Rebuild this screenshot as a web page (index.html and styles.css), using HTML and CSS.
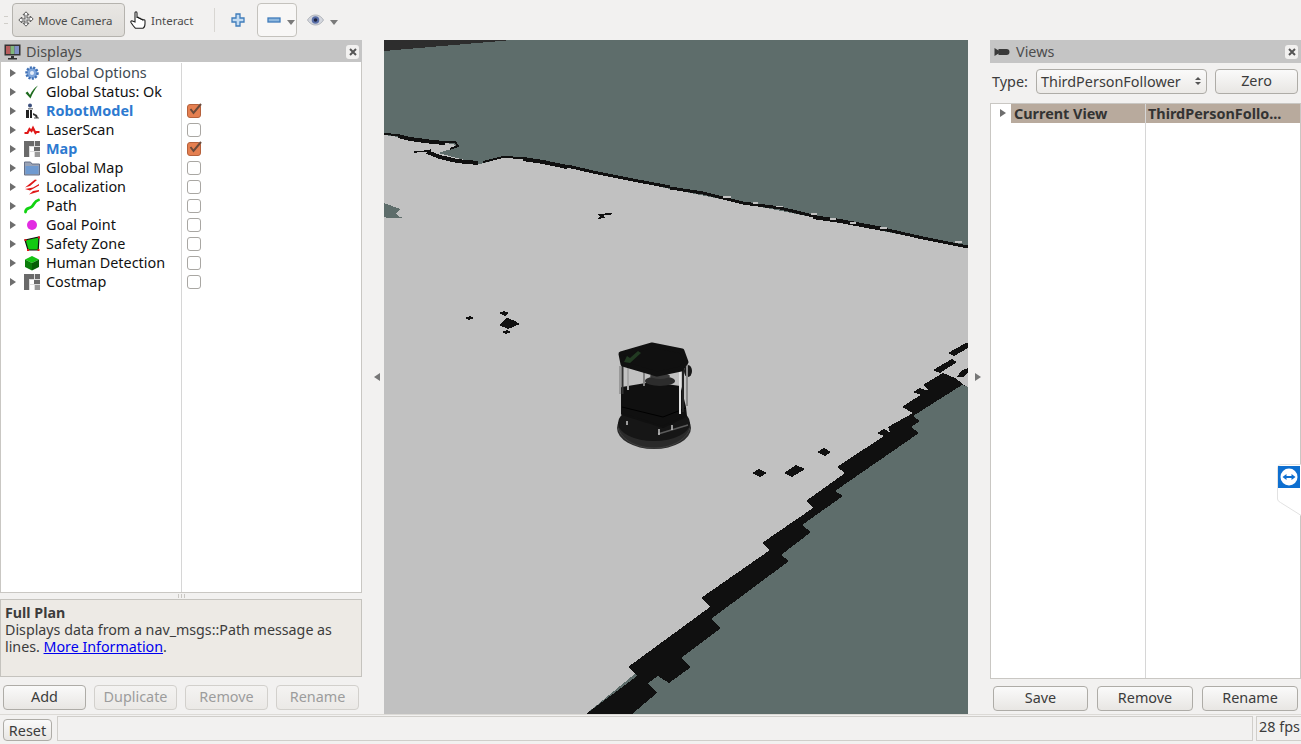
FILE: index.html
```html
<!DOCTYPE html>
<html lang="en">
<head>
  <meta charset="UTF-8" />
  <title>RViz</title>
  <link rel="stylesheet" href="styles.css">
</head>
<body>

<div class="toolbar">
  <span class="grip"></span>
  <button class="tool tool-active">
    <svg width="18" height="18" viewBox="0 0 18 18" fill="#fff" stroke="#555" stroke-width="1">
      <path d="M9 .8l3 3h-2v3.200h3.200v-2l3 3-3 3v-2H10v3.200h2l-3 3-3-3h2V10H4.800v2l-3-3 3-3v2H8V3.800H6z"/>
      <path d="M5 9h8M9 5v8" stroke="#999" stroke-width=".7"/>
    </svg>
    Move Camera
  </button>
  <button class="tool tool-hand">
    <svg width="18" height="20" viewBox="0 0 18 20" fill="#fff" stroke="#222" stroke-width="1.100">
      <path d="M5 12V3c0-1.600 2-1.600 2 0v5c0-1 2-1 2 0v1c0-1 2-1 2 0v1c0-1 2-1 2 0 .5-.5 2-.5 2 .8v3c0 2-1 4-2 4.500H5.500C4 17 2 14 1 12.500c-.6-1.200 .8-2.400 2-1.200z"/>
    </svg>
    Interact
  </button>
  <span class="tool-sep"></span>
  <svg class="plus" width="14" height="14" viewBox="0 0 14 14" fill="#c4dcf2" stroke="#3f7cba" stroke-width="1.300">
    <path d="M5 1h4v4h4v4H9v4H5V9H1V5h4z"/>
  </svg>
  <button class="minus-btn">
    <svg width="14" height="6" viewBox="0 0 14 6" fill="#8fb8de" stroke="#3f7cba" stroke-width="1.300"><rect x="1" y="1" width="12" height="4"/></svg>
    <span class="drop"></span>
  </button>
  <svg class="eye" width="17" height="12" viewBox="0 0 17 12">
    <path d="M.5 6C3 2 6 1 8.500 1S14 2 16.500 6C14 10 11 11 8.500 11S3 10 .5 6z" fill="#d3d6dd" stroke="#9a9da6" stroke-width=".7"/>
    <circle cx="8.500" cy="6" r="3.800" fill="#5a6fa8"/>
    <circle cx="8.500" cy="6" r="1.800" fill="#1e2440"/>
  </svg>
  <span class="drop"></span>
</div>

<div class="main">

  <div class="dock dock-left">
    <div class="dock-title">
      <svg width="17" height="16" viewBox="0 0 17 16">
        <rect x=".5" y=".5" width="16" height="11" fill="#333"/>
        <rect x="2" y="2" width="4.500" height="8" fill="#b85d5d"/>
        <rect x="6.500" y="2" width="4" height="8" fill="#7fb57a"/>
        <rect x="10.500" y="2" width="4.500" height="8" fill="#7f8fc4"/>
        <path d="M7 12h3v2h3v1.500H4V14h3z" fill="#333"/>
      </svg>
      <span class="dock-name">Displays</span>
      <span class="dock-close"><svg width="8" height="8" viewBox="0 0 8 8" stroke="#555" stroke-width="2"><path d="M1 1l6 6M7 1l-6 6"/></svg></span>
    </div>

    <div class="tree display-tree">
      <div class="tree-names">
        <div class="row"><span class="arrow"></span>
          <svg class="ico" width="16" height="16" viewBox="0 0 16 16"><circle cx="8" cy="8" r="5.500" fill="#7fa6db" stroke="#3f70b5" stroke-width="2.500" stroke-dasharray="2 1.300"/><circle cx="8" cy="8" r="2" fill="#e5eefa"/></svg>
          <span class="row-text dim">Global Options</span></div>
        <div class="row"><span class="arrow"></span>
          <svg class="ico" width="16" height="16" viewBox="0 0 16 16"><path d="M1.500 9l2-1.500 2.500 3.500C8 7 10.500 3.500 14 1.500 11 5 8.500 9.500 6.500 14.500z" fill="#1e6b1e"/></svg>
          <span class="row-text">Global Status: Ok</span></div>
        <div class="row"><span class="arrow"></span>
          <svg class="ico" width="16" height="16" viewBox="0 0 16 16"><circle cx="6" cy="2.500" r="2" fill="#3c4f7c"/><rect x="4" y="5" width="5" height="1.500" fill="#8a8a8a"/><path d="M2 7h3v8H2zM6 7h2v8H6z" fill="#222"/><path d="M9 10l4 2 1 3h-2l-1-2-2-1z" fill="#333"/><path d="M10 15h5" stroke="#555"/></svg>
          <span class="row-text changed">RobotModel</span></div>
        <div class="row"><span class="arrow"></span>
          <svg class="ico" width="16" height="16" viewBox="0 0 16 16"><path d="M.5 11h3l2-4 2 2 1.500-3 2.500 5 1-1h3" fill="none" stroke="#e01818" stroke-width="2.200"/></svg>
          <span class="row-text">LaserScan</span></div>
        <div class="row"><span class="arrow"></span>
          <svg class="ico" width="16" height="16" viewBox="0 0 16 16"><rect width="16" height="16" fill="#ddd"/><path d="M0 0h5v5H0zM5 0h5v5H5zM0 5h5v5H0zM0 10h5v6H0zM11 0h5v5h-5zM10 6h6v4h-6z" fill="#6a6a6a"/><path d="M11 11h5v5h-5z" fill="#999"/><path d="M6 6h4v4H6zM6 11h4v5H6z" fill="#fff"/></svg>
          <span class="row-text changed">Map</span></div>
        <div class="row"><span class="arrow"></span>
          <svg class="ico" width="16" height="16" viewBox="0 0 16 16"><path d="M.5 2h6l1.500 2h7.500v11H.5z" fill="#9aa3b5" stroke="#667087"/><rect x="1.500" y="6" width="13" height="8" fill="#6f9ad0"/></svg>
          <span class="row-text">Global Map</span></div>
        <div class="row"><span class="arrow"></span>
          <svg class="ico" width="16" height="16" viewBox="0 0 16 16" fill="#e01818"><path d="M11 .5l2 .5-7 6-5 1.500zM15 5v1.500L6 11.500l-5-1.500 8-1.500zM15 11v1.500L5 15.500l4-3.500z"/></svg>
          <span class="row-text">Localization</span></div>
        <div class="row"><span class="arrow"></span>
          <svg class="ico" width="16" height="16" viewBox="0 0 16 16"><path d="M1.500 14c0-5 4-3 6.500-5.500S10.500 3 14.500 2" fill="none" stroke="#12d312" stroke-width="2.800" stroke-linecap="round"/></svg>
          <span class="row-text">Path</span></div>
        <div class="row"><span class="arrow"></span>
          <svg class="ico" width="16" height="16" viewBox="0 0 16 16"><circle cx="8" cy="8" r="5" fill="#e22be2"/></svg>
          <span class="row-text">Goal Point</span></div>
        <div class="row"><span class="arrow"></span>
          <svg class="ico" width="16" height="16" viewBox="0 0 16 16"><path d="M1 4l14-3-.8 13H4z" fill="#12c912" stroke="#111" stroke-width="1.200"/><path d="M.5 3h2v2h-2zM14 .5h2v2h-2zM13.500 13h2v2h-2zM3 13h2v2H3z" fill="#e01818"/></svg>
          <span class="row-text">Safety Zone</span></div>
        <div class="row"><span class="arrow"></span>
          <svg class="ico" width="16" height="16" viewBox="0 0 16 16"><path d="M8 1l7 3.500L8 8 1 4.500z" fill="#16c316"/><path d="M1 4.500L8 8v7.500L1 12z" fill="#0b7d0b"/><path d="M15 4.500L8 8v7.500l7-3.500z" fill="#075f07"/></svg>
          <span class="row-text">Human Detection</span></div>
        <div class="row"><span class="arrow"></span>
          <svg class="ico" width="16" height="16" viewBox="0 0 16 16"><rect width="16" height="16" fill="#ddd"/><path d="M0 0h5v5H0zM5 0h5v5H5zM0 5h5v5H0zM0 10h5v6H0zM11 0h5v5h-5zM10 6h6v4h-6z" fill="#6a6a6a"/><path d="M11 11h5v5h-5z" fill="#999"/><path d="M6 6h4v4H6zM6 11h4v5H6z" fill="#fff"/></svg>
          <span class="row-text">Costmap</span></div>
      </div>
      <div class="tree-checks">
        <div class="row"></div>
        <div class="row"></div>
        <div class="row"><span class="check check-on"><svg width="16" height="14" viewBox="0 0 16 14" fill="none" stroke="#6b4a3a" stroke-width="2"><path d="M3.500 6l3 4L14 1"/></svg></span></div>
        <div class="row"><span class="check"></span></div>
        <div class="row"><span class="check check-on"><svg width="16" height="14" viewBox="0 0 16 14" fill="none" stroke="#6b4a3a" stroke-width="2"><path d="M3.500 6l3 4L14 1"/></svg></span></div>
        <div class="row"><span class="check"></span></div>
        <div class="row"><span class="check"></span></div>
        <div class="row"><span class="check"></span></div>
        <div class="row"><span class="check"></span></div>
        <div class="row"><span class="check"></span></div>
        <div class="row"><span class="check"></span></div>
        <div class="row"><span class="check"></span></div>
      </div>
    </div>

    <div class="handle"><i></i><i></i><i></i></div>

    <div class="info">
      <strong>Full Plan</strong><br>
      Displays data from a nav_msgs::Path message as<br>
      lines. <a href="#">More Information</a>.
    </div>

    <div class="btn-row left-btns">
      <button class="btn">Add</button>
      <button class="btn" disabled>Duplicate</button>
      <button class="btn" disabled>Remove</button>
      <button class="btn" disabled>Rename</button>
    </div>
  </div>

  <div class="splitter"><span class="tri tri-left"></span></div>

  <div class="viewport">
    <svg class="scene" width="584" height="674" viewBox="384 40 584 674">
      <rect x="384" y="40" width="584" height="674" fill="#5e6d6b"/>
      <polygon points="384,40 512,40 384,51" fill="#2d2d2d"/>
      <!-- floor -->
      <polygon fill="#c1c1c1" points="384,135 413,139 453,144 458,147 448,150 438,153 480,164 503,158 523,159 580,169 670,189 968,248 968,400 586,714 384,714"/>
      <polygon fill="#5e6d6b" points="384,203 392,206 400,209 396,214 400,217 403,218 387,218 384,217"/>
      <!-- top wall -->
      <g fill="none" stroke="#101010" stroke-width="3">
        <polyline stroke-width="2" points="384,134 398,135"/>
        <polyline stroke-width="4" points="398,136 410,139 433,142 445,143"/>
        <polyline stroke-width="2" points="440,142 455,142 458,146 450,149"/>
        <polyline stroke-width="1.500" points="414,152 428,151 431,150"/>
        <polyline stroke-width="4" points="427,152 440,157 457,161 478,163"/>
        <polyline stroke-width="2" points="483,162 503,157 523,158"/>
        <polyline stroke-width="4" points="523,159 543,162 567,167"/>
        <polyline points="567,166 593,172 633,180 670,187"/>
        <polyline points="670,188 703,193 743,203 780,208 813,216"/>
        <polyline stroke-width="4" points="813,217 840,221 883,229"/>
        <polyline points="883,229 923,238 968,247"/>
      </g>
      <g fill="#c1c1c1">
        <rect x="723" y="196" width="8" height="2"/>
        <rect x="753" y="202" width="5" height="2"/>
        <rect x="776" y="206" width="7" height="1"/>
        <rect x="811" y="213" width="6" height="2"/>
        <rect x="830" y="218" width="6" height="2"/>
        <rect x="850" y="222" width="6" height="2"/>
        <rect x="880" y="227" width="7" height="2"/>
        <rect x="955" y="241" width="7" height="2"/>
      </g>
      <polygon fill="#101010" points="597,214 612,213 611,215 604,215 605,218 597,219 600,216"/>
      <!-- specks -->
      <g fill="#101010">
        <polygon points="465,318 470,316 474,318 469,320"/>
        <polygon points="499,313 504,311 509,313 505,316"/>
        <polygon points="499,325 507,318 513,320 520,324 508,329"/>
        <polygon points="502,332 507,330 511,332 506,334"/>
        <polygon points="752,473 759,469 767,473 760,477"/>
        <polygon points="784,473 796,465 805,469 792,477"/>
        <polygon points="817,452 824,448 831,452 825,456"/>
        <polygon points="948,353 966,343 968,343 968,348 954,356"/>
        <polygon points="933,370 952,359 957,362 940,373"/>
        <polygon points="957,377 962,370 968,368 968,373 963,377"/>
        <polygon points="913,392 920,388 928,391 921,395"/>
        <polygon points="877,433 884,429 893,434 886,437"/>
      </g>
      <!-- lower wall -->
      <polygon fill="#101010" points="586,714 637,676 628,667 710,607 701,598 770,550 762,543 813,508 806,501 845,473 837,467 890,432 888,427 913,413 902,407 928,390 923,385 943,373 955,378 968,388 968,714"/>
      <polygon fill="#5e6d6b" points="632,714 657,693 648,683 658,676 669,683 691,667 681,658 721,628 711,619 789,561 781,555 811,532 802,525 843,496 835,491 919,433 911,427 920,421 913,416 962,385 968,387 968,714"/>
      <!-- robot -->
      <g class="robot">
        <ellipse cx="654" cy="428" rx="37" ry="21" fill="#2a2a2a"/>
        <ellipse cx="654" cy="423" rx="36" ry="18" fill="#161616"/>
        <path d="M618 428c4 13 20 20 36 20s32-7 36-20" fill="none" stroke="#404040" stroke-width="1"/>
        <path d="M658 434l30-9" stroke="#5c5c5c" stroke-width="1.500"/>
        <path d="M627 425v-4M659 435v-6M672 430v-5" stroke="#c8c8c8" stroke-width="1.500"/>
        <polygon points="622,388 652,383 680,387 685,407 686,416 663,427 622,414" fill="#101010" stroke="#101010" stroke-width="2" stroke-linejoin="round"/>
        <path d="M622 407l41 10 23-9" fill="none" stroke="#000" stroke-width="1"/>
        <ellipse cx="660" cy="381" rx="15" ry="5" fill="#2c2c2c"/>
        <ellipse cx="660" cy="376" rx="10" ry="3" fill="#3a3a3a"/>
        <ellipse cx="688" cy="371" rx="4" ry="6" fill="#181818"/>
        <g stroke-width="2">
          <path d="M620 366v28" stroke="#9a9a9a"/>
          <path d="M622.500 366v28" stroke="#333"/>
          <path d="M628 368v22" stroke="#a8a8a8"/>
          <path d="M680 368v46" stroke="#e2e2e2"/>
          <path d="M683 368v44" stroke="#222"/>
          <path d="M687 364v42" stroke="#8a8a8a"/>
          <path d="M644 372v14" stroke="#808080"/>
        </g>
        <polygon points="621,354 652,345 682,351 686,362 681,369 657,374 623,364" fill="#101010" stroke="#101010" stroke-width="5" stroke-linejoin="round"/>
        <path d="M624 362l6 1 11-10-3-2-8 7-3-2z" fill="#223a22"/>
      </g>
    </svg>
  </div>

  <div class="splitter"><span class="tri tri-right"></span></div>

  <div class="dock dock-right">
    <div class="dock-title">
      <svg width="17" height="16" viewBox="0 0 17 16" fill="#3a3a3a"><path d="M.5 4l4 2.500V5h8a3 3 0 0 1 0 6h-8V9.500L.5 12z"/></svg>
      <span class="dock-name">Views</span>
      <span class="dock-close"><svg width="8" height="8" viewBox="0 0 8 8" stroke="#555" stroke-width="2"><path d="M1 1l6 6M7 1l-6 6"/></svg></span>
    </div>

    <div class="type-row">
      <span class="type-label">Type:</span>
      <div class="combo">ThirdPersonFollower<span class="spin"><i class="up"></i><i class="dn"></i></span></div>
      <button class="btn zero">Zero</button>
    </div>

    <div class="tree view-tree">
      <div class="view-col view-col-a">
        <div class="view-head"><span class="arrow"></span><b>Current View</b></div>
      </div>
      <div class="view-col view-col-b">
        <div class="view-head"><b>ThirdPersonFollo...</b></div>
      </div>
    </div>

    <div class="btn-row right-btns">
      <button class="btn">Save</button>
      <button class="btn">Remove</button>
      <button class="btn">Rename</button>
    </div>
  </div>

</div>

<div class="statusbar">
  <button class="btn reset">Reset</button>
  <div class="status-field"></div>
  <div class="status-field fps">28 fps</div>
</div>

<!-- remote desktop tab that floats over the window -->
<svg class="tv-tab" width="25" height="54" viewBox="0 0 25 54">
  <path d="M25 .5H4Q.5 .5 .5 4v31q0 2 3 3.500L25 52" fill="#fff" stroke="#e2e2e2"/>
  <rect x="1" y="2" width="22" height="22" fill="#0e6fd0"/>
  <circle cx="12" cy="13" r="8.500" fill="#fff"/>
  <path d="M5.500 13l4-3v2h5v-2l4 3-4 3v-2h-5v2z" fill="#0e6fd0"/>
</svg>

</body>
</html>
```

FILE: styles.css
```css
body {
  margin: 0;
  width: 1301px;
  height: 744px;
  overflow: hidden;
  background: #f2f1f0;
  font-family: "Noto Sans", "Open Sans", sans-serif;
  font-size: 14.4px;
  color: #3c3c3c;
}
button {
  font-family: inherit;
  cursor: pointer;
}

/* toolbar */
.toolbar {
  height: 40px;
  box-sizing: border-box;
  display: flex;
  align-items: center;
}
.grip {
  width: 4px;
  height: 8px;
  margin: 0 4px;
  border-top: 1px solid #d0cec9;
  border-bottom: 1px solid #d0cec9;
  box-sizing: border-box;
}
.tool {
  height: 34px;
  border: 1px solid transparent;
  background: none;
  padding: 0 4px;
  display: flex;
  align-items: center;
  gap: 3px;
  font-size: 11.500px;
  color: #4c4c4c;
}
.tool-active {
  width: 113px;
  background: linear-gradient(#e9e7e4, #dedcd8);
  border-color: #b5b3ae;
  border-radius: 4px;
  margin-right: 1px;
}
.tool-hand {
  padding-left: 3px;
}
.tool-sep {
  width: 1px;
  height: 24px;
  background: #d8d6d2;
  margin: 0 16px 0 16px;
}
.plus {
  margin: 0 12px 0 0;
}
.minus-btn {
  width: 40px;
  height: 34px;
  border: 1px solid #c4c2bd;
  border-radius: 4px;
  background: #f8f7f6;
  display: flex;
  align-items: center;
  padding: 0 0 0 9px;
  margin-right: 10px;
}
.drop {
  width: 0;
  height: 0;
  margin: 5px 0 0 6px;
  border-left: 4px solid transparent;
  border-right: 4px solid transparent;
  border-top: 5px solid #7a7a7a;
}

/* main row */
.main {
  display: flex;
  height: 674px;
}
.dock {
  display: flex;
  flex-direction: column;
}
.dock-left {
  width: 362px;
}
.dock-right {
  width: 311px;
}
.splitter {
  width: 22px;
  display: flex;
  align-items: center;
  justify-content: center;
}
.tri {
  width: 0;
  height: 0;
  border-top: 4px solid transparent;
  border-bottom: 4px solid transparent;
}
.tri-left {
  border-right: 6px solid #777;
  margin-left: 8px;
}
.tri-right {
  border-left: 6px solid #777;
  margin-left: -2px;
}
.viewport {
  width: 584px;
  height: 674px;
}
.scene {
  display: block;
  shape-rendering: crispEdges;
}
.robot {
  shape-rendering: auto;
  filter: blur(0.5px);
}
.dock-title {
  height: 23px;
  flex: none;
  background: #c5c5c5;
  display: flex;
  align-items: center;
  padding: 0 3px 0 4px;
}
.dock-name {
  margin-left: 5px;
  margin-bottom: 1px;
  color: #4d4d4d;
  flex: 1;
}
.dock-close {
  width: 13px;
  height: 14px;
  background: #f2f1f0;
  border-radius: 3px;
  display: flex;
  align-items: center;
  justify-content: center;
}

/* tree */
.tree {
  background: #fff;
  border: 1px solid #c9c7c3;
  display: flex;
  box-sizing: border-box;
}
.display-tree {
  height: 531px;
  margin-top: -1px;
  border-top: 0;
  padding-top: 1px;
}
.tree-names {
  width: 180px;
  border-right: 1px solid #d6d6d6;
}
.row {
  height: 19px;
  display: flex;
  align-items: center;
  color: #111;
}
.arrow {
  width: 0;
  height: 0;
  border-top: 4px solid transparent;
  border-bottom: 4px solid transparent;
  border-left: 6px solid #6e6e6e;
  margin: 0 0 0 9px;
}
.ico {
  margin-left: 8px;
  flex: none;
}
.row-text {
  margin-left: 6px;
  white-space: nowrap;
}
.dim {
  color: #3e4a52;
}
.changed {
  color: #2d7ad0;
  font-weight: bold;
}
.check {
  width: 14px;
  height: 14px;
  box-sizing: border-box;
  margin-left: 5px;
  border: 1px solid #a9a7a3;
  border-radius: 3px;
  background: #fff;
  position: relative;
}
.check-on {
  background: #e57f50;
  border-color: #b5613c;
}
.check-on svg {
  position: absolute;
  left: -1px;
  top: -2px;
}
.handle {
  height: 6px;
  display: flex;
  justify-content: center;
  align-items: center;
  gap: 2px;
}
.handle i {
  width: 1px;
  height: 4px;
  background: #c9c7c3;
}
.info {
  height: 78px;
  box-sizing: border-box;
  background: #edeae5;
  border: 1px solid #c5c3be;
  padding: 4px 4px;
  line-height: 17px;
  font-size: 14.250px;
  color: #3c3c3c;
}
.info a {
  color: #0000ee;
}

/* buttons */
.btn-row {
  display: flex;
}
.left-btns {
  gap: 8px;
  padding: 8px 0 0 3px;
}
.left-btns .btn {
  width: 83px;
}
.right-btns {
  gap: 9px;
  padding: 7px 0 0 3px;
}
.right-btns .btn {
  width: 96px;
}
.right-btns .btn:first-child {
  width: 95px;
}
.btn {
  height: 25px;
  padding: 0 0 2px;
  border: 1px solid #aeaca7;
  border-radius: 4px;
  background: linear-gradient(#fafafa, #e8e6e3);
  font-size: 14.400px;
  color: #3c3c3c;
}
.btn:disabled {
  border-color: #d2d0cc;
  background: linear-gradient(#f4f3f2, #ebe9e6);
  color: #9c9c9c;
}

/* views dock */
.type-row {
  height: 40px;
  flex: none;
  box-sizing: border-box;
  display: flex;
  align-items: center;
  padding: 0 3px 3px 2px;
}
.type-label {
  width: 44px;
  margin-bottom: 1px;
}
.combo {
  width: 171px;
  height: 25px;
  box-sizing: border-box;
  border: 1px solid #aeaca7;
  border-radius: 4px;
  background: linear-gradient(#fafafa, #eceae7);
  display: flex;
  align-items: center;
  justify-content: space-between;
  padding: 0 5px 1px 4px;
  color: #3c3c3c;
}
.spin {
  display: flex;
  flex-direction: column;
  gap: 2px;
}
.spin i {
  width: 0;
  height: 0;
  border-left: 3px solid transparent;
  border-right: 3px solid transparent;
}
.spin .up {
  border-bottom: 3px solid #555;
}
.spin .dn {
  border-top: 3px solid #555;
}
.zero {
  width: 83px;
  margin-left: 8px;
}
.view-tree {
  height: 576px;
}
.view-col-a {
  width: 154px;
  border-right: 1px solid #d6d6d6;
}
.view-col-b {
  flex: 1;
  min-width: 0;
}
.view-head {
  height: 19px;
  display: flex;
  align-items: center;
  color: #333;
  white-space: nowrap;
  background: #b8aa9d;
  padding: 0 0 1px 2px;
  box-sizing: border-box;
}
.view-col-a .view-head {
  background: linear-gradient(90deg, #fff 20px, #b8aa9d 20px);
  padding-left: 0;
}
.view-col-a b {
  margin-left: 8px;
}

/* status bar */
.statusbar {
  height: 30px;
  box-sizing: border-box;
  border-top: 1px solid #dcdad6;
  display: flex;
  align-items: flex-start;
  padding: 1px 0 0 3px;
  gap: 3px;
}
.reset {
  width: 49px;
  height: 22px;
  margin: 3px 2px 0 0;
  padding: 0;
}
.status-field {
  flex: 1;
  height: 25px;
  box-sizing: border-box;
  border: 1px solid #d0ceca;
}
.fps {
  flex: none;
  width: 45px;
  border-right: 0;
  line-height: 20px;
  padding-left: 2px;
  white-space: nowrap;
}

.tv-tab {
  position: absolute;
  left: 1277px;
  top: 464px;
}
```
